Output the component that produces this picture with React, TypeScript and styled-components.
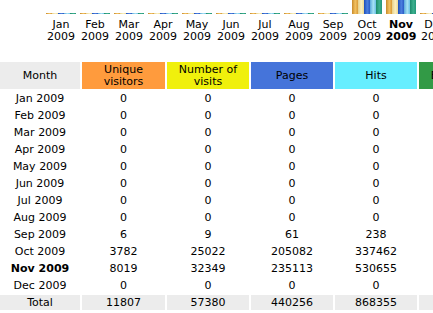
import React from "react";
import styled, { createGlobalStyle } from "styled-components";

const GlobalStyle = createGlobalStyle`
  html, body {
    margin: 0;
    padding: 0;
    background: #fff;
    overflow: hidden;
  }
  body {
    font-family: "DejaVu Sans", Verdana, sans-serif;
    font-size: 11px;
    color: #000;
  }
`;

type Metric = "u" | "v" | "p" | "h" | "k";

type MonthRow = {
  month: string;
  year: string;
  u: number;
  v: number;
  p: number;
  h: number;
  k: number;
  bw: string;
  current?: boolean;
};

const months: MonthRow[] = [
  { month: "Jan", year: "2009", u: 0, v: 0, p: 0, h: 0, k: 0, bw: "0" },
  { month: "Feb", year: "2009", u: 0, v: 0, p: 0, h: 0, k: 0, bw: "0" },
  { month: "Mar", year: "2009", u: 0, v: 0, p: 0, h: 0, k: 0, bw: "0" },
  { month: "Apr", year: "2009", u: 0, v: 0, p: 0, h: 0, k: 0, bw: "0" },
  { month: "May", year: "2009", u: 0, v: 0, p: 0, h: 0, k: 0, bw: "0" },
  { month: "Jun", year: "2009", u: 0, v: 0, p: 0, h: 0, k: 0, bw: "0" },
  { month: "Jul", year: "2009", u: 0, v: 0, p: 0, h: 0, k: 0, bw: "0" },
  { month: "Aug", year: "2009", u: 0, v: 0, p: 0, h: 0, k: 0, bw: "0" },
  { month: "Sep", year: "2009", u: 6, v: 9, p: 61, h: 238, k: 2, bw: "2.31 MB" },
  { month: "Oct", year: "2009", u: 3782, v: 25022, p: 205082, h: 337462, k: 2870, bw: "2.80 GB" },
  { month: "Nov", year: "2009", u: 8019, v: 32349, p: 235113, h: 530655, k: 3410, bw: "3.33 GB", current: true },
  { month: "Dec", year: "2009", u: 0, v: 0, p: 0, h: 0, k: 0, bw: "0" },
];

const totals = { u: 11807, v: 57380, p: 440256, h: 868355, bw: "6.13 GB" };

const barFill: Record<Metric, string> = {
  u: "linear-gradient(90deg, #c88a2a, #f2c160 55%, #d89a38)",
  v: "linear-gradient(90deg, #e6d08a, #fbf0c0 55%, #ecd894)",
  p: "linear-gradient(90deg, #1d4fb8, #4c7fe0 55%, #2a5cc4)",
  h: "linear-gradient(90deg, #5aa8dc, #a6e2f4 55%, #6cc0e6)",
  k: "linear-gradient(90deg, #1c8a6c, #3cb08e 55%, #24967a)",
};

const headTone: Record<string, string> = {
  month: "#ececec",
  u: "#ff9b3d",
  v: "#f0f00c",
  p: "#4574da",
  h: "#66eeff",
  k: "#329a46",
};

const Page = styled.div`
  display: flex;
  flex-direction: column;
  gap: 19px;
`;

const Chart = styled.div`
  display: flex;
  padding-left: 44px;
`;

const MonthCol = styled.div`
  flex: 0 0 34px;
  display: flex;
  flex-direction: column;
  align-items: center;
  gap: 5px;
`;

// only the foot of the bars is in view, the chart top is scrolled off
const Bars = styled.div`
  height: 14px;
  width: 34px;
  overflow: hidden;
  display: flex;
  align-items: flex-end;
  justify-content: center;
`;

const Bar = styled.div<{ $metric: Metric }>`
  width: 6px;
  background: ${(p) => barFill[p.$metric]};
`;

const MonthLabel = styled.div<{ $current?: boolean }>`
  text-align: center;
  line-height: 12px;
  white-space: nowrap;
  font-weight: ${(p) => (p.$current ? "bold" : "normal")};
`;

const Table = styled.div`
  display: grid;
  grid-template-columns: 80px 83px 82px 82px 82px 82px;
  gap: 2px;
  width: max-content;
`;

const HeadCell = styled.div<{ $tone: string }>`
  height: 27px;
  display: flex;
  align-items: center;
  justify-content: center;
  text-align: center;
  line-height: 12px;
  background: ${(p) => headTone[p.$tone]};
`;

const Cell = styled.div<{ $total?: boolean; $bold?: boolean }>`
  height: 15px;
  line-height: 15px;
  text-align: center;
  white-space: nowrap;
  background: ${(p) => (p.$total ? "#ececec" : "transparent")};
  font-weight: ${(p) => (p.$bold ? "bold" : "normal")};
`;

const maxV = Math.max(...months.map((m) => m.v));
const maxH = Math.max(...months.map((m) => m.h));
const maxK = Math.max(...months.map((m) => m.k));

const barHeight = (value: number, max: number) =>
  Math.max(1, Math.round((value / max) * 180));

const App: React.FC = () => {
  return (
    <>
      <GlobalStyle />
      <Page>
        <Chart>
          {months.map((m) => (
            <MonthCol key={m.month}>
              <Bars>
                <Bar $metric="u" style={{ height: barHeight(m.u, maxV) }} />
                <Bar $metric="v" style={{ height: barHeight(m.v, maxV) }} />
                <Bar $metric="p" style={{ height: barHeight(m.p, maxH) }} />
                <Bar $metric="h" style={{ height: barHeight(m.h, maxH) }} />
                <Bar $metric="k" style={{ height: barHeight(m.k, maxK) }} />
              </Bars>
              <MonthLabel $current={m.current}>
                {m.month}
                <br />
                {m.year}
              </MonthLabel>
            </MonthCol>
          ))}
        </Chart>

        <Table>
          <HeadCell $tone="month">Month</HeadCell>
          <HeadCell $tone="u">
            Unique
            <br />
            visitors
          </HeadCell>
          <HeadCell $tone="v">
            Number of
            <br />
            visits
          </HeadCell>
          <HeadCell $tone="p">Pages</HeadCell>
          <HeadCell $tone="h">Hits</HeadCell>
          <HeadCell $tone="k">Bandwidth</HeadCell>

          {months.map((m) => (
            <React.Fragment key={m.month}>
              <Cell $bold={m.current}>
                {m.month} {m.year}
              </Cell>
              <Cell>{m.u}</Cell>
              <Cell>{m.v}</Cell>
              <Cell>{m.p}</Cell>
              <Cell>{m.h}</Cell>
              <Cell>{m.bw}</Cell>
            </React.Fragment>
          ))}

          <Cell $total>Total</Cell>
          <Cell $total>{totals.u}</Cell>
          <Cell $total>{totals.v}</Cell>
          <Cell $total>{totals.p}</Cell>
          <Cell $total>{totals.h}</Cell>
          <Cell $total>{totals.bw}</Cell>
        </Table>
      </Page>
    </>
  );
};

export default App;
